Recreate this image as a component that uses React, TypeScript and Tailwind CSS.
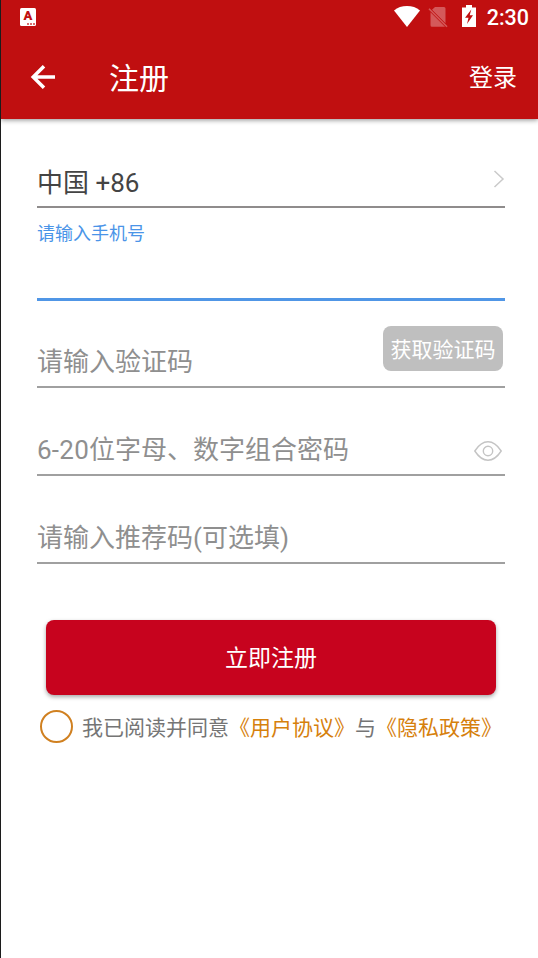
function StatusBar() {
  return (
    <div className="flex h-[36px] items-center justify-between pl-[19px] pr-[9px]">
      <div className="-mt-0.5 flex h-[18px] w-4 flex-col items-center rounded-[1.5px] bg-white">
        <span className="font-['Roboto'] text-[13px] font-black leading-[16px] text-[#c00f10]">
          A
        </span>
        <div className="-mt-px flex gap-px self-end pr-px">
          <i className="h-[2px] w-[2px] bg-[#c00f10]/60" />
          <i className="h-[2px] w-[2px] bg-[#c00f10]/60" />
          <i className="h-[2px] w-[2px] bg-[#c00f10]/60" />
        </div>
      </div>
      <div className="flex items-center">
        <svg className="-mt-1" width="26" height="21" viewBox="0 0 26 21" fill="#fff">
          <path d="M0 4.4C3.5 1.5 8 0 13 0s9.500 1.500 13 4.400L13 21z" />
        </svg>
        <svg className="-mt-0.5 ml-2" width="20" height="21" viewBox="0 0 20 21">
          <path
            d="M7 0h9a1.500 1.500 0 0 1 1.500 1.500v14.800L4 2.800zM2.500 5.200 17 19.700H4A1.500 1.500 0 0 1 2.500 18.200z"
            fill="#d4595a"
          />
          <path d="M1 1.800 19 19.800" stroke="#d4595a" strokeWidth="1.600" />
        </svg>
        <svg className="-mt-1 ml-[14px]" width="14" height="22" viewBox="0 0 14 22">
          <path d="M4 0h6v2.500h4V22H0V2.500h4z" fill="#fff" />
          <path d="M9.300 4.500 3 12.800h3.500L5 19l6-8.800H7.700z" fill="#c00f10" />
        </svg>
        <span className="ml-[11px] text-[21.5px] font-medium leading-[36px]">
          2:30
        </span>
      </div>
    </div>
  );
}

function Header() {
  return (
    <header className="h-[119px] bg-[#c00f10] text-white shadow-[0_1px_5px_rgba(0,0,0,0.45)]">
      <StatusBar />
      <div className="flex h-[83px] items-center pl-[29px] pr-[21px]">
        <svg className="-mt-0.5" width="26" height="24" viewBox="0 0 26 24" fill="none">
          <path
            d="M25 12H4M14 1.200 3.200 12 14 22.800"
            stroke="#fff"
            strokeWidth="3.500"
          />
        </svg>
        <h1 className="ml-[53px] pt-[3px] text-[30px] leading-10">注册</h1>
        <a className="ml-auto pt-px text-[24px] leading-10">登录</a>
      </div>
    </header>
  );
}

export default function App() {
  return (
    <div className="h-[958px] w-[538px] overflow-hidden border-l border-[#1c1c1c] bg-white font-['Roboto','Noto_Sans_CJK_SC',sans-serif]">
      <Header />

      <div className="pl-9 pr-[33px] text-[26px] text-[#8f8f8f]">
        <div className="flex h-[89px] items-end justify-between border-b-2 border-[#8f8c8c] pb-[3px] text-[#444]">
          <span className="leading-10">中国 +86</span>
          <svg className="mb-[15px]" width="12" height="18" viewBox="0 0 12 18">
            <path
              d="M1.500 1 10 9l-8.500 8"
              fill="none"
              stroke="#cacaca"
              strokeWidth="1.500"
            />
          </svg>
        </div>

        <div className="h-[93px] border-b-[3px] border-[#5096e6] pt-3 text-[18px] leading-7 text-[#4a94e8]">
          请输入手机号
        </div>

        <div className="flex h-[87px] items-end justify-between border-b-2 border-[#a0a0a0] pb-1">
          <span className="leading-10">请输入验证码</span>
          <button className="mb-[11px] mr-0.5 h-[45px] w-[120px] rounded-lg bg-[#bfbfbf] pt-[5px] text-[21px] text-white">
            获取验证码
          </button>
        </div>

        <div className="flex h-[88px] items-end justify-between border-b-2 border-[#a0a0a0] pb-1">
          <span className="leading-10">
            <span className="tracking-[0.25px]">6-20</span>
            位字母、数字组合密码
          </span>
          <svg
            className="mb-[9px] mr-[3px]"
            width="28"
            height="20"
            viewBox="0 0 28 20"
            fill="none"
            stroke="#c4c4c4"
            strokeWidth="1.400"
          >
            <path d="M.8 10C5 3.500 9.300.8 14 .8S23 3.500 27.200 10C23 16.500 18.700 19.200 14 19.200S5 16.500.8 10z" />
            <circle cx="14" cy="10" r="4.700" />
          </svg>
        </div>

        <div className="flex h-[88px] items-end border-b-2 border-[#a0a0a0] pb-1">
          <span className="leading-10">请输入推荐码(可选填)</span>
        </div>
      </div>

      <div className="mt-14 pl-[45px]">
        <button className="h-[75px] w-[450px] rounded-lg bg-[#c7031e] pt-1 text-[23px] text-white shadow-[0_2px_4px_rgba(0,0,0,0.35)]">
          立即注册
        </button>
      </div>

      <div className="mt-[15px] flex items-center pl-[39px] text-[21px] leading-[33px] text-[#757575]">
        <span className="mr-[9px] h-[33px] w-[33px] shrink-0 rounded-full border-2 border-[#d08020]" />
        <p className="-mb-0.5 whitespace-nowrap pt-0.5">
          我已阅读并同意
          <a className="text-[#d6800c]">《用户协议》</a>与
          <a className="text-[#d6800c]">《隐私政策》</a>
        </p>
      </div>
    </div>
  );
}
